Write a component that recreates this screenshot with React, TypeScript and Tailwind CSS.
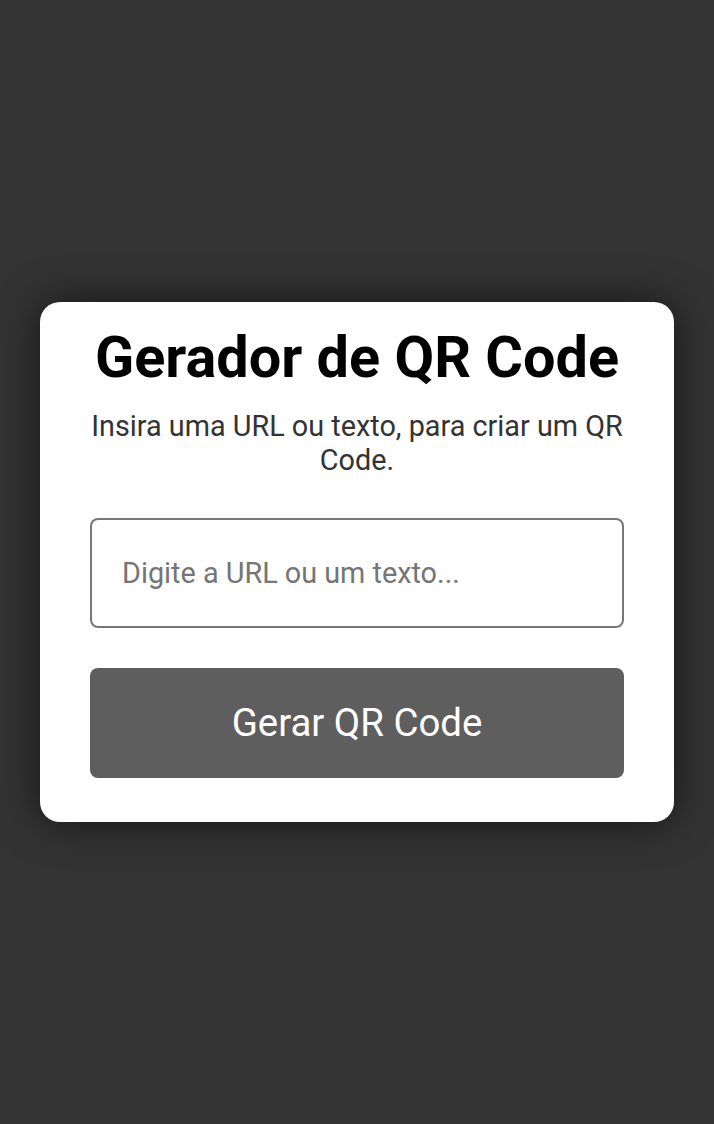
import React from "react";

export default function App() {
  return (
    <div
      className="min-h-screen w-full bg-[#333333] flex items-center justify-center"
      style={{ fontFamily: "Roboto, 'Liberation Sans', sans-serif" }}
    >
      <div className="w-[634px] bg-white rounded-[20px] shadow-[0_0_40px_rgba(0,0,0,0.6)] px-[50px] pt-[21px] pb-[44px] flex flex-col items-center">
        <h1 className="text-[57.6px] font-bold text-black leading-[70px] text-center">Gerador de QR Code</h1>
        <p className="mt-[16px] text-[28.8px] leading-[34px] text-[#333333] text-center">
          Insira uma URL ou texto, para criar um QR Code.
        </p>
        <input
          type="text"
          placeholder="Digite a URL ou um texto..."
          className="mt-[41px] w-full h-[110px] border-2 border-[#777777] rounded-[8px] px-[30px] text-[28.8px] text-[#333] placeholder:text-[#757575] outline-none"
        />
        <button className="mt-[40px] w-full h-[110px] bg-[#5e5e5e] rounded-[8px] text-white text-[38.4px]">
          Gerar QR Code
        </button>
      </div>
    </div>
  );
}
